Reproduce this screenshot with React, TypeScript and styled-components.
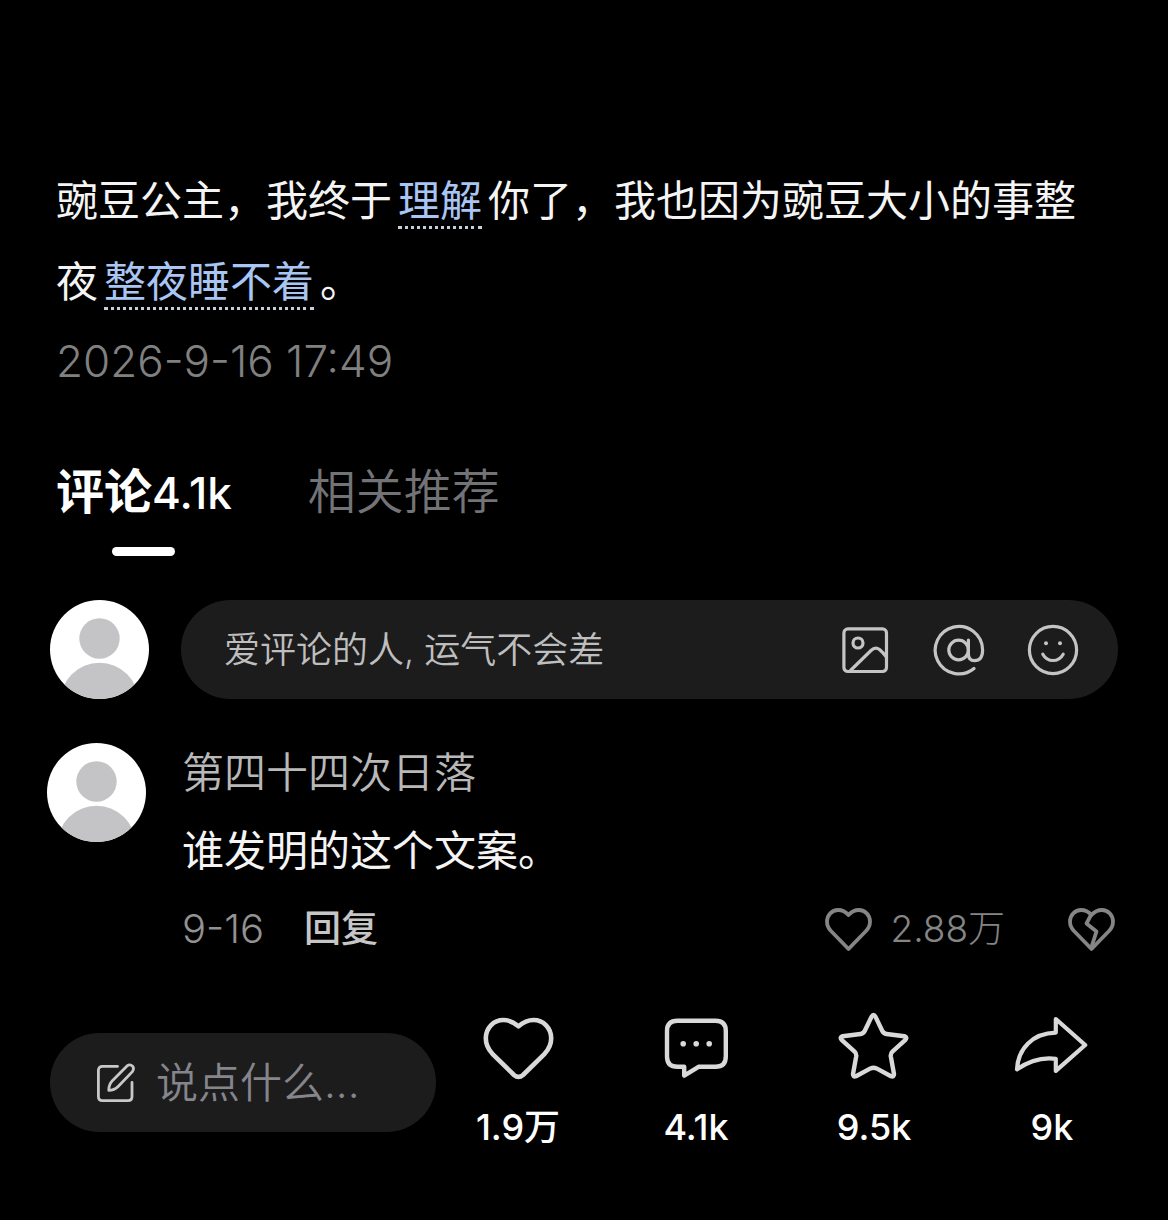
import React from "react";
import styled, { createGlobalStyle } from "styled-components";

const GlobalStyle = createGlobalStyle`
  *, *::before, *::after { box-sizing: border-box; }
  body {
    margin: 0;
    background: #000;
    color: #f4f4f4;
    font-family: Inter, "Noto Sans CJK SC", sans-serif;
  }
  button, input {
    margin: 0;
    padding: 0;
    border: 0;
    background: none;
    color: inherit;
    font: inherit;
  }
  button { cursor: pointer; }
  p, h2 { margin: 0; font-weight: 400; }
  svg { display: block; flex: none; }
`;

const Page = styled.main`
  display: flex;
  flex-direction: column;
  min-height: 100vh;
  padding-top: 160px;
`;

const Post = styled.article`
  padding: 0 56px;
`;

const PostText = styled.p`
  font-size: 42px;
  line-height: 81px;
`;

const TopicLink = styled.a`
  margin: 0 6px;
  color: #a8c5f3;
  text-decoration: none;
  border-bottom: 3px dotted #c9cfda;
`;

const PostDate = styled.time`
  display: block;
  color: #808080;
  font-size: 44px;
  font-weight: 300;
  line-height: 78px;
`;

const Tabs = styled.div`
  display: flex;
  gap: 76px;
  padding: 58px 56px 44px;
`;

const Tab = styled.button<{ $active?: boolean }>`
  display: flex;
  flex-direction: column;
  align-items: center;
  gap: 20px;
  color: ${(p) => (p.$active ? "#fff" : "#737377")};
  font-size: 48px;
  font-weight: ${(p) => (p.$active ? 700 : 350)};
  line-height: 67px;

  &::after {
    content: "";
    width: 63px;
    height: 9px;
    border-radius: 5px;
    background: ${(p) => (p.$active ? "#fff" : "transparent")};
  }
`;

const TabCount = styled.span`
  font-size: 44px;
  font-weight: 500;
`;

const Composer = styled.form`
  display: flex;
  gap: 32px;
  padding: 0 50px;
`;

const Pill = styled.div`
  display: flex;
  align-items: center;
  height: 99px;
  border-radius: 50px;
  background: #1c1c1d;
`;

const ComposerPill = styled(Pill)`
  flex: 1;
  min-width: 0;
  gap: 42px;
  padding: 0 39px 0 43px;
`;

const ComposerInput = styled.input`
  flex: 1;
  min-width: 0;
  height: 60px;
  outline: none;
  font-size: 36px;
  font-weight: 350;
  &::placeholder { color: #bebebe; opacity: 1; }
`;

const ToolButton = styled.button`
  color: #c4c4c6;
`;

const Comment = styled.section`
  display: flex;
  gap: 36px;
  padding: 44px 52px 0 47px;
`;

const CommentBody = styled.div`
  display: flex;
  flex: 1;
  flex-direction: column;
  gap: 18px;
  min-width: 0;
  line-height: 60px;
`;

const Author = styled.h2`
  color: #b8b8b8;
  font-size: 42px;
  font-weight: 350;
`;

const CommentText = styled.p`
  font-size: 42px;
`;

const Meta = styled.div`
  display: flex;
  align-items: center;
  color: #858585;
  font-size: 37px;
`;

const CommentDate = styled.time`
  color: #929292;
  font-size: 40px;
  font-weight: 350;
`;

const ReplyButton = styled.button`
  margin-left: 40px;
  color: #c6c6c6;
  font-weight: 500;
`;

const Votes = styled.div`
  display: flex;
  align-items: center;
  gap: 62px;
  margin-left: auto;
`;

const VoteButton = styled.button`
  display: flex;
  align-items: center;
  gap: 17px;
  font-weight: 300;
`;

const BottomBar = styled.footer`
  display: flex;
  align-items: center;
  gap: 38px;
  padding: 51px 72px 64px 50px;
`;

const SayPill = styled(Pill)`
  flex: 0 1 386px;
  min-width: 0;
  gap: 20px;
  padding: 0 46px;
  color: #c8c8ca;
`;

const SayInput = styled.input`
  flex: 1;
  min-width: 0;
  height: 60px;
  outline: none;
  font-size: 42px;
  font-weight: 350;
  &::placeholder { color: #85858b; opacity: 1; }
`;

const Actions = styled.div`
  display: flex;
  flex: 1;
  justify-content: space-between;
`;

const Action = styled.button`
  display: flex;
  flex-direction: column;
  align-items: center;
  gap: 18px;
  width: 88px;
  color: #fff;
  font-size: 36px;
  font-weight: 500;
  line-height: 55px;
  white-space: nowrap;

  svg { color: #d9d9d9; }
`;

function Avatar({ id }: { id: string }) {
  return (
    <svg width="99" height="99" viewBox="0 0 99 99" aria-hidden="true">
      <clipPath id={id}>
        <circle cx="49.5" cy="49.5" r="49.5" />
      </clipPath>
      <g clipPath={`url(#${id})`}>
        <rect width="99" height="99" fill="#fff" />
        <circle cx="49.5" cy="38.5" r="20.2" fill="#c4c3c5" />
        <circle cx="49.5" cy="102" r="39.2" fill="#c4c3c5" />
      </g>
    </svg>
  );
}

type GlyphProps = {
  w: number;
  h: number;
  stroke: number;
  children: React.ReactNode;
};

function Glyph({ w, h, stroke, children }: GlyphProps) {
  return (
    <svg
      width={w}
      height={h}
      viewBox={`0 0 ${w} ${h}`}
      fill="none"
      stroke="currentColor"
      strokeWidth={stroke}
      strokeLinecap="round"
      strokeLinejoin="round"
      aria-hidden="true"
    >
      {children}
    </svg>
  );
}

const ImageIcon = () => (
  <Glyph w={52} h={52} stroke={3.2}>
    <rect x="4.9" y="4.9" width="42.6" height="42.6" rx="4" />
    <circle cx="19" cy="19" r="5" />
    <path d="M11.5 46.5 L32 26.5 Q36.3 22.3 40.5 25.5 Q45 29.5 47 32.5" />
  </Glyph>
);

const AtIcon = () => (
  <Glyph w={52} h={52} stroke={3.2}>
    <circle cx="25.6" cy="26" r="9.8" />
    <path d="M35.4 16 V30 Q35.4 36.6 41.5 36.6 C47.5 36.6 49.6 32 49.6 26 A23.7 23.7 0 1 0 41 44.4" />
  </Glyph>
);

const SmileIcon = () => (
  <Glyph w={52} h={52} stroke={3.2}>
    <circle cx="26" cy="26" r="23.6" />
    <path d="M15.8 30.2 C20.5 38.6 31.5 38.6 36.2 30.2" />
    <circle cx="19" cy="19.2" r="2" fill="currentColor" stroke="none" />
    <circle cx="33" cy="19.2" r="2" fill="currentColor" stroke="none" />
  </Glyph>
);

const SMALL_HEART =
  "M24.5 9 C21.5 5.5 18 4 14 4 C8 4 3 9 3 15.5 C3 19.5 4.5 22.5 7 25 L24.5 43 L42 25 C44.5 22.5 46 19.5 46 15.5 C46 9 41 4 35 4 C31 4 27.5 5.5 24.5 9 Z";

const SmallHeartIcon = () => (
  <Glyph w={49} h={46} stroke={3.8}>
    <path d={SMALL_HEART} />
  </Glyph>
);

const BrokenHeartIcon = () => (
  <Glyph w={49} h={46} stroke={3.8}>
    <path d={SMALL_HEART} />
    <path d="M24 9 L19.5 17.5 L29.5 25.5 L24.8 40" />
  </Glyph>
);

const EditIcon = () => (
  <Glyph w={40} h={40} stroke={2.8}>
    <path d="M21.5 3.4 H6.5 Q2.4 3.4 2.4 7.5 V33.5 Q2.4 37.6 6.5 37.6 H32 Q36 37.6 36 33.5 V19.5" />
    <path d="M12.8 27.4 C12.6 23 14 20.2 16.6 17.4 L31 2.9 Q34 0.8 36.4 3 Q38.6 5.4 36.4 8.6 L22.4 23.2 C19.8 25.8 17 27.4 12.8 27.4 Z" />
  </Glyph>
);

const HeartIcon = () => (
  <Glyph w={80} h={72} stroke={4.6}>
    <path d="M40.5 16.4 C36 12.4 31 10 25.5 10 C15.5 10 7.8 18 7.8 28.2 C7.8 34.5 10.4 39.4 14.4 43.8 L36 65 Q40.5 68.8 45 65 L66.6 43.8 C70.6 39.4 73.2 34.5 73.2 28.2 C73.2 18 65.5 10 55.5 10 C50 10 45 12.4 40.5 16.4 Z" />
  </Glyph>
);

const BubbleIcon = () => (
  <Glyph w={80} h={72} stroke={4.4}>
    <path d="M21.5 10.7 H59.5 Q69.8 10.7 69.8 21 V46.5 Q69.8 56.8 59.5 56.8 H42.5 L28.2 65.6 V56.8 H21.5 Q11 56.8 11 46.5 V21 Q11 10.7 21.5 10.7 Z" />
    <g fill="currentColor" stroke="none">
      <circle cx="27.2" cy="33.8" r="2.8" />
      <circle cx="40.2" cy="33.8" r="2.8" />
      <circle cx="53.2" cy="33.8" r="2.8" />
    </g>
  </Glyph>
);

const StarIcon = () => (
  <Glyph w={80} h={72} stroke={4.4}>
    <path d="M37.6 6.6 Q39.5 3.4 41.4 6.6 L48.2 20.8 Q49.5 23.6 52.5 24 L70.4 26.2 Q73.6 27.2 71.4 29.8 L58.4 41.6 Q56.4 43.4 56.8 46.4 L60 64 Q60 67.4 57 66.2 L42.5 58.4 Q39.5 57 36.5 58.4 L22 66.2 Q19 67.4 19 64 L22.2 46.4 Q22.6 43.4 20.6 41.6 L7.6 29.8 Q5.4 27.2 8.6 26.2 L26.5 24 Q29.5 23.6 30.8 20.8 Z" />
  </Glyph>
);

const ShareIcon = () => (
  <Glyph w={80} h={72} stroke={4.2}>
    <path d="M43.8 9 L73.2 35 L43.8 60.8 V48.8 C30 47 17.5 50.5 5 59.4 C6 38.5 20.5 23.2 43.8 22.6 Z" />
  </Glyph>
);

const actions = [
  { name: "点赞", count: "1.9万", Icon: HeartIcon },
  { name: "评论", count: "4.1k", Icon: BubbleIcon },
  { name: "收藏", count: "9.5k", Icon: StarIcon },
  { name: "分享", count: "9k", Icon: ShareIcon },
];

export default function App() {
  return (
    <>
      <GlobalStyle />
      <Page lang="zh-CN">
        <Post>
          <PostText>
            豌豆公主，我终于<TopicLink href="#understand">理解</TopicLink>
            你了，我也因为豌豆大小的事整夜
            <TopicLink href="#sleepless">整夜睡不着</TopicLink>。
          </PostText>
          <PostDate dateTime="2026-09-16T17:49">2026-9-16 17:49</PostDate>
        </Post>

        <Tabs role="tablist">
          <Tab type="button" role="tab" aria-selected="true" $active>
            <span>
              评论<TabCount>4.1k</TabCount>
            </span>
          </Tab>
          <Tab type="button" role="tab" aria-selected="false">
            相关推荐
          </Tab>
        </Tabs>

        <Composer onSubmit={(e) => e.preventDefault()}>
          <Avatar id="me" />
          <ComposerPill>
            <ComposerInput aria-label="评论" placeholder="爱评论的人, 运气不会差" />
            <ToolButton type="button" aria-label="图片">
              <ImageIcon />
            </ToolButton>
            <ToolButton type="button" aria-label="提及">
              <AtIcon />
            </ToolButton>
            <ToolButton type="button" aria-label="表情">
              <SmileIcon />
            </ToolButton>
          </ComposerPill>
        </Composer>

        <Comment>
          <Avatar id="author" />
          <CommentBody>
            <Author>第四十四次日落</Author>
            <CommentText>谁发明的这个文案。</CommentText>
            <Meta>
              <CommentDate dateTime="09-16">9-16</CommentDate>
              <ReplyButton type="button">回复</ReplyButton>
              <Votes>
                <VoteButton type="button" aria-label="赞 2.88万">
                  <SmallHeartIcon />
                  2.88万
                </VoteButton>
                <VoteButton type="button" aria-label="踩">
                  <BrokenHeartIcon />
                </VoteButton>
              </Votes>
            </Meta>
          </CommentBody>
        </Comment>

        <BottomBar>
          <SayPill>
            <EditIcon />
            <SayInput aria-label="说点什么" placeholder="说点什么..." />
          </SayPill>
          <Actions>
            {actions.map(({ name, count, Icon }) => (
              <Action key={name} type="button" aria-label={`${name} ${count}`}>
                <Icon />
                {count}
              </Action>
            ))}
          </Actions>
        </BottomBar>
      </Page>
    </>
  );
}
